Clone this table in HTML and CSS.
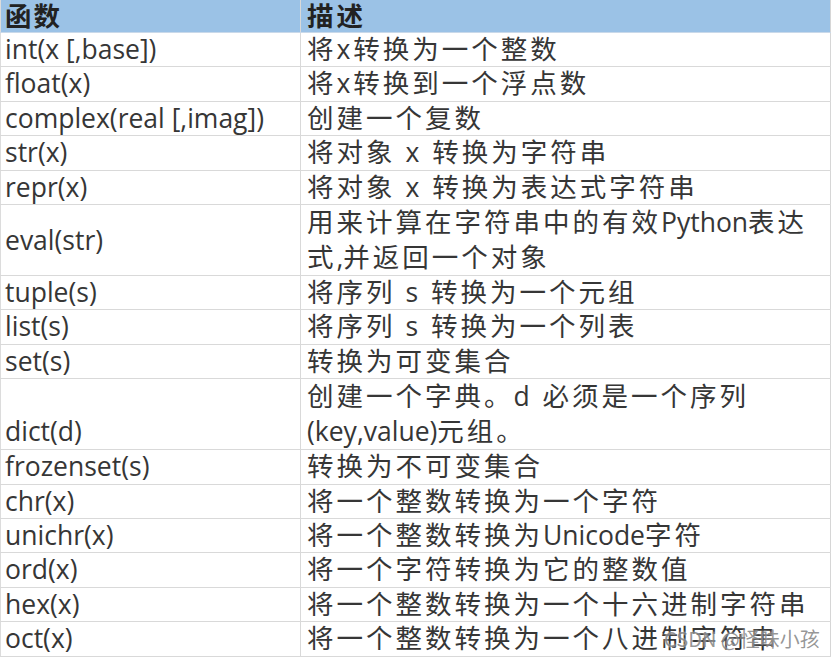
FILE: index.html
```html
<!DOCTYPE html>
<html lang="zh">
<head>
<meta charset="utf-8">
<title>函数</title>
<link rel="stylesheet" href="styles.css">
</head>
<body>
<div class="page">
<table class="fn-table">
  <thead>
    <tr class="head"><th class="c1 cjk">函数</th><th class="c2">描述</th></tr>
  </thead>
  <tbody>
    <tr class="r"><td class="c1">int(x [,base])</td><td class="c2">将x转换为一个整数</td></tr>
    <tr class="r"><td class="c1">float(x)</td><td class="c2">将x转换到一个浮点数</td></tr>
    <tr class="r"><td class="c1">complex(real [,imag])</td><td class="c2">创建一个复数</td></tr>
    <tr class="r"><td class="c1">str(x)</td><td class="c2">将对象 x 转换为字符串</td></tr>
    <tr class="r"><td class="c1">repr(x)</td><td class="c2">将对象 x 转换为表达式字符串</td></tr>
    <tr class="r2"><td class="c1">eval(str)</td><td class="c2">用来计算在字符串中的有效<span class="lt">Python</span>表达<br>式<span class="lt">,</span>并返回一个对象</td></tr>
    <tr class="r"><td class="c1">tuple(s)</td><td class="c2">将序列 s 转换为一个元组</td></tr>
    <tr class="r"><td class="c1">list(s)</td><td class="c2">将序列 s 转换为一个列表</td></tr>
    <tr class="r"><td class="c1">set(s)</td><td class="c2">转换为可变集合</td></tr>
    <tr class="r2"><td class="c1 bottom">dict(d)</td><td class="c2">创建一个字典。d 必须是一个序列<br><span class="lt">(key,value)</span>元组。</td></tr>
    <tr class="r"><td class="c1">frozenset(s)</td><td class="c2">转换为不可变集合</td></tr>
    <tr class="r"><td class="c1">chr(x)</td><td class="c2">将一个整数转换为一个字符</td></tr>
    <tr class="r"><td class="c1">unichr(x)</td><td class="c2">将一个整数转换为<span class="lt">Unicode</span>字符</td></tr>
    <tr class="r"><td class="c1">ord(x)</td><td class="c2">将一个字符转换为它的整数值</td></tr>
    <tr class="r"><td class="c1">hex(x)</td><td class="c2">将一个整数转换为一个十六进制字符串</td></tr>
    <tr class="r last"><td class="c1">oct(x)</td><td class="c2">将一个整数转换为一个八进制字符串</td></tr>
  </tbody>
</table>
<div class="watermark">CSDN @怪味小孩</div>
</div>
</body>
</html>
```

FILE: styles.css
```css
html, body {
  margin: 0;
  padding: 0;
  background: #ffffff;
}
.page {
  position: relative;
  width: 834px;
  height: 660px;
  overflow: hidden;
  background: #ffffff;
}
.fn-table {
  border-collapse: collapse;
  width: 831px;
  table-layout: fixed;
  font-family: "Open Sans", "Noto Sans CJK SC", sans-serif;
  font-size: 26.5px;
  color: #363636;
  border-left: 1px solid #dcdcdc;
  border-right: 1px solid #d6d6d6;
  border-bottom: 1px solid #d6d6d6;
}
.fn-table th,
.fn-table td {
  padding: 0;
  border-bottom: 1px solid #d9d9d9;
  text-align: left;
  vertical-align: middle;
  white-space: nowrap;
}
.fn-table .c1 {
  width: 295px;
  padding-left: 4px;
  border-right: 1px solid #d9d9d9;
}
.fn-table .c2 {
  padding-left: 6px;
  letter-spacing: 3px;
}
.fn-table .cjk {
  letter-spacing: 2px;
}
.lt {
  letter-spacing: 0;
}
.head th {
  background: #9bc2e6;
  height: 32px;
  line-height: 32px;
  font-weight: 700;
  color: #222222;
  border-bottom: 1px solid #c9d9ea;
  border-right-color: #9bc2e6;
}
.r td {
  height: 33.4px;
  line-height: 33.4px;
}
.r2 td {
  height: 70px;
  line-height: 35px;
}
.fn-table td.bottom {
  vertical-align: bottom;
}
.watermark {
  position: absolute;
  left: 664px;
  top: 626px;
  font-family: "Noto Sans CJK SC", "Open Sans", sans-serif;
  font-size: 20px;
  line-height: 26px;
  color: rgba(105, 105, 105, 0.7);
  text-shadow: 0 0 2px rgba(255, 255, 255, 0.9);
  white-space: nowrap;
}
```
